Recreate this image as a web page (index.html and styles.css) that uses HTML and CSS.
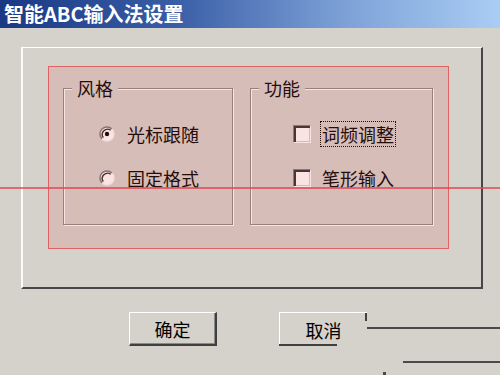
FILE: index.html
```html
<!DOCTYPE html>
<html lang="zh-CN">
<head>
<meta charset="utf-8">
<title>智能ABC输入法设置</title>
<link rel="stylesheet" href="styles.css">
</head>
<body>
<div class="window">
  <div class="titlebar">智能ABC输入法设置</div>
  <div class="client">
    <div class="outer">
      <div class="group g1">
        <span class="legend">风格</span>
        <div class="opt">
          <svg class="radio" width="16" height="16" viewBox="0 0 16 16">
            <circle cx="8" cy="8" r="7" fill="#fff"/>
            <path d="M3.05 12.95 A7 7 0 0 1 12.95 3.05" fill="none" stroke="#7a7a7a" stroke-width="1.5"/>
            <path d="M4.3 11.7 A5.3 5.3 0 0 1 11.7 4.3" fill="none" stroke="#2a2a2a" stroke-width="1.4"/>
            <path d="M12.95 3.05 A7 7 0 0 1 3.05 12.95" fill="none" stroke="#f6f6f6" stroke-width="1.4"/>
            <circle cx="8" cy="8" r="2.2" fill="#000"/>
          </svg>
          <span class="lbl">光标跟随</span>
        </div>
        <div class="opt">
          <svg class="radio" width="16" height="16" viewBox="0 0 16 16">
            <circle cx="8" cy="8" r="7" fill="#fff"/>
            <path d="M3.05 12.95 A7 7 0 0 1 12.95 3.05" fill="none" stroke="#7a7a7a" stroke-width="1.5"/>
            <path d="M4.3 11.7 A5.3 5.3 0 0 1 11.7 4.3" fill="none" stroke="#2a2a2a" stroke-width="1.4"/>
            <path d="M12.95 3.05 A7 7 0 0 1 3.05 12.95" fill="none" stroke="#f6f6f6" stroke-width="1.4"/>
          </svg>
          <span class="lbl">固定格式</span>
        </div>
      </div>
      <div class="group g2">
        <span class="legend">功能</span>
        <div class="opt">
          <span class="check"></span>
          <span class="lbl focus">词频调整</span>
        </div>
        <div class="opt">
          <span class="check"></span>
          <span class="lbl">笔形输入</span>
        </div>
      </div>
    </div>
    <div class="buttons">
      <div class="btn">确定</div>
      <div class="btn cancel">取消</div>
    </div>
  </div>
  <div class="highlight"></div>
  <div class="hline"></div>
  <div class="artifact art1"></div>
  <div class="artifact art2"></div>
  <div class="artifact art3"></div>
</div>
</body>
</html>
```
FILE: styles.css
```css
html, body {
  margin: 0;
  padding: 0;
}
body {
  width: 500px;
  height: 375px;
  overflow: hidden;
  background: #d5d2cb;
  font-family: "Noto Sans CJK SC", "Noto Sans", sans-serif;
  color: #000;
}
.window {
  position: relative;
  width: 500px;
  height: 375px;
}
.titlebar {
  height: 28px;
  line-height: 28px;
  padding-left: 4px;
  box-sizing: border-box;
  color: #fff;
  font-weight: bold;
  font-size: 20px;
  letter-spacing: 0;
  white-space: nowrap;
  background: linear-gradient(90deg, #1a3884 0%, #3a5ea6 35%, #7fa3d8 70%, #a9cdf3 100%);
}
.client {
  padding: 19px 0 0 21px;
}
.outer {
  width: 462px;
  height: 242px;
  box-sizing: border-box;
  border-top: 1px solid #fff;
  border-left: 2px solid #fbfbf8;
  border-right: 2px solid #464646;
  border-bottom: 2px solid #464646;
  display: flex;
  align-items: flex-start;
  gap: 17px;
  padding: 40px 0 0 40px;
}
.group {
  position: relative;
  box-sizing: border-box;
  height: 137px;
  border: 1px solid #8d8a85;
  box-shadow: 1px 1px 0 #fff, inset 1px 1px 0 #fff;
  display: flex;
  flex-direction: column;
  gap: 20px;
  padding-top: 33px;
}
.g1 {
  width: 170px;
  padding-left: 35px;
}
.g2 {
  width: 183px;
  padding-left: 42px;
}
.legend {
  position: absolute;
  top: -12px;
  left: 8px;
  padding: 0 5px;
  background: #d5d2cb;
  font-size: 18px;
  line-height: 22px;
}
.opt {
  display: flex;
  align-items: center;
  height: 24px;
}
.radio {
  flex: none;
  margin-right: 10px;
}
.check {
  flex: none;
  width: 18px;
  height: 18px;
  box-sizing: border-box;
  background: #fff;
  border-top: 1px solid #808080;
  border-left: 1px solid #808080;
  border-right: 1px solid #fff;
  border-bottom: 1px solid #fff;
  box-shadow: inset 2px 2px 0 #303030, inset -1px -1px 0 #d4d0c8;
  margin-right: 9px;
}
.lbl {
  font-size: 18px;
  line-height: 24px;
  white-space: nowrap;
  padding: 0 1px;
  border: 1px solid transparent;
}
.focus {
  border: 1px dotted #000;
}
.buttons {
  display: flex;
  gap: 62px;
  padding-left: 108px;
  margin-top: 23px;
}
.btn {
  position: relative;
  width: 88px;
  height: 34px;
  box-sizing: border-box;
  border-top: 1px solid #fff;
  border-left: 1px solid #fff;
  border-right: 2px solid #404040;
  border-bottom: 2px solid #404040;
  box-shadow: inset -1px -1px 0 #8a8a8a;
  display: flex;
  align-items: center;
  justify-content: center;
  font-size: 18px;
  line-height: 24px;
}
.cancel {
  border-right: none;
  border-bottom: none;
  box-shadow: none;
}
.cancel::before {
  content: "";
  position: absolute;
  right: 0;
  top: 0;
  width: 2px;
  height: 8px;
  background: #404040;
}
.cancel::after {
  content: "";
  position: absolute;
  left: -1px;
  bottom: 0;
  width: 58px;
  height: 2px;
  background: #404040;
}
.highlight {
  position: absolute;
  left: 48px;
  top: 66px;
  width: 401px;
  height: 183px;
  box-sizing: border-box;
  border: 1px solid #e06262;
  background: rgba(224, 80, 80, 0.16);
}
.hline {
  position: absolute;
  left: 0;
  top: 187px;
  width: 500px;
  height: 2px;
  background: rgba(225, 70, 80, 0.75);
}
.artifact {
  position: absolute;
  background: #4a4a4a;
}
.art1 {
  left: 367px;
  top: 327px;
  width: 133px;
  height: 2px;
}
.art2 {
  left: 403px;
  top: 361px;
  width: 97px;
  height: 2px;
}
.art3 {
  left: 383px;
  top: 372px;
  width: 3px;
  height: 3px;
}
```
